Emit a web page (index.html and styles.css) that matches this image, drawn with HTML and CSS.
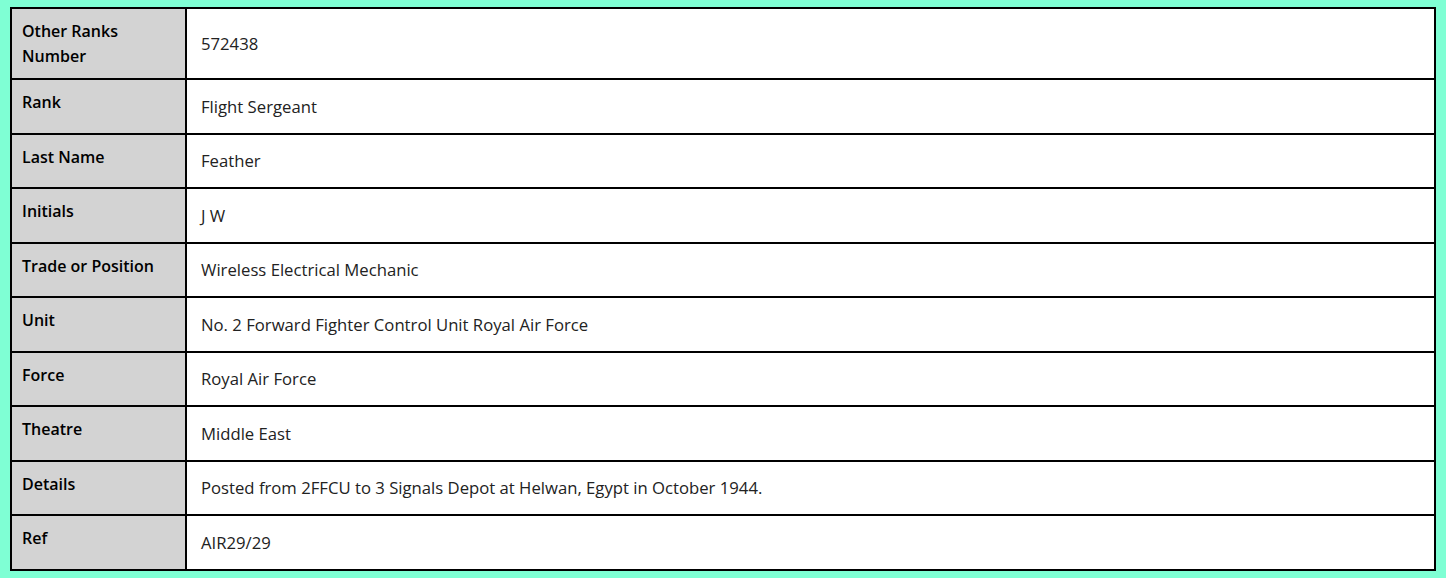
FILE: index.html
```html
<!DOCTYPE html>
<html>
<head>
<meta charset="utf-8">
<link rel="stylesheet" href="styles.css">
</head>
<body>
<div class="page">
  <table class="record">
    <tr><th>Other Ranks Number</th><td>572438</td></tr>
    <tr><th>Rank</th><td>Flight Sergeant</td></tr>
    <tr><th>Last Name</th><td>Feather</td></tr>
    <tr><th>Initials</th><td>J W</td></tr>
    <tr><th>Trade or Position</th><td>Wireless Electrical Mechanic</td></tr>
    <tr><th>Unit</th><td>No. 2 Forward Fighter Control Unit Royal Air Force</td></tr>
    <tr><th>Force</th><td>Royal Air Force</td></tr>
    <tr><th>Theatre</th><td>Middle East</td></tr>
    <tr><th>Details</th><td>Posted from 2FFCU to 3 Signals Depot at Helwan, Egypt in October 1944.</td></tr>
    <tr><th>Ref</th><td>AIR29/29</td></tr>
  </table>
</div>
</body>
</html>
```

FILE: styles.css
```css
html, body {
  margin: 0;
  padding: 0;
  background: #7fffd4;
}
.page {
  padding: 7px 10px;
  font-family: "Open Sans", "Noto Sans", sans-serif;
  font-size: 16px;
}
.record {
  width: 1426px;
  border-collapse: separate;
  border-spacing: 0;
  border: 2px solid #000;
  table-layout: fixed;
}
.record th, .record td {
  border-bottom: 2px solid #000;
  line-height: 24.5px;
}
.record tr:last-child th, .record tr:last-child td {
  border-bottom: none;
}
.record th {
  width: 153px;
  background: #d3d3d3;
  border-right: 2px solid #000;
  text-align: left;
  vertical-align: top;
  font-weight: 600;
  color: #000;
  padding: 10px 10px 10px 10px;
}
.record td {
  background: #fff;
  color: #222;
  font-size: 16.7px;
  vertical-align: middle;
  padding: 14.5px 14px 13.5px;
}
```
